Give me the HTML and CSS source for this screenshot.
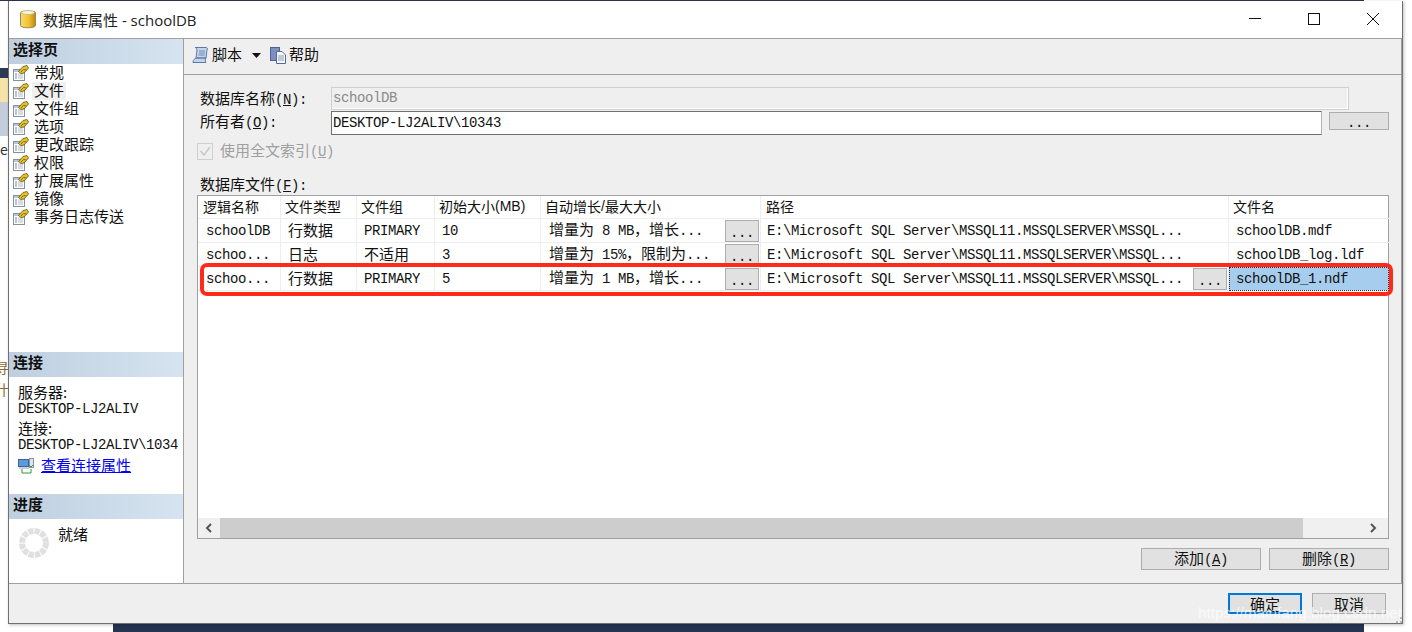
FILE: index.html
```html
<!DOCTYPE html>
<html lang="zh-CN">
<head>
<meta charset="utf-8">
<title>数据库属性 - schoolDB</title>
<link rel="stylesheet" href="styles.css">
</head>
<body>
<svg class="defs" width="0" height="0">
  <symbol id="page" viewBox="0 0 16 16">
    <rect x="0.500" y="4.500" width="11" height="11" fill="#fff" stroke="#8a9099"/>
    <rect x="1" y="5" width="10" height="2" fill="#b6c6dc"/>
    <path d="M2 9h2M2 11h2M2 13h2" stroke="#6d86b0"/>
    <path d="M5 9h5M5 11h5M5 13h5" stroke="#b0b8c4"/>
    <path d="M5.500 6.500 L10 1.500 L14 0.500 L15.500 3 L11 8 L8 8.500 Z" fill="#f0c020" stroke="#5a5020" stroke-width="0.8"/>
    <path d="M8 7l2.500-2.500 3 0.500" fill="none" stroke="#4f7d3a"/>
  </symbol>
</svg>
<div class="desktop">
  <div class="bg-top"></div>
  <div class="bg-navy"></div>
  <div class="bg-yellow"></div>
  <div class="bg-slate"></div>
  <div class="bg-bottom"></div>
  <span class="bg-e">e</span>
  <span class="bg-a">寻</span>
  <span class="bg-b">什</span>
</div>

<div class="window">
  <header class="titlebar">
    <svg class="db-icon" width="16" height="20" viewBox="0 0 16 20">
      <defs><linearGradient id="dbg" x1="0" x2="1" y1="0" y2="0"><stop offset="0" stop-color="#f7d978"/><stop offset="0.55" stop-color="#f2c230"/><stop offset="1" stop-color="#b98a10"/></linearGradient></defs>
      <path d="M0.500 3.500C0.500 1.500 15.500 1.500 15.500 3.500V16.500C15.500 19.500 0.500 19.500 0.500 16.500Z" fill="url(#dbg)" stroke="#9a8a50"/>
      <ellipse cx="8" cy="3.500" rx="6.500" ry="2" fill="#f5f1dc" stroke="#b8a868" stroke-width="0.6"/>
    </svg>
    <span class="title-text">数据库属性 - schoolDB</span>
    <div class="winctl">
      <svg width="14" height="14" viewBox="0 0 14 14"><path d="M1 6.500H13" stroke="#111"/></svg>
      <svg width="14" height="14" viewBox="0 0 14 14"><rect x="1.500" y="1.500" width="11" height="11" fill="none" stroke="#111"/></svg>
      <svg width="14" height="14" viewBox="0 0 14 14"><path d="M1 1L13 13M13 1L1 13" stroke="#111"/></svg>
    </div>
  </header>

  <div class="body">
    <aside class="sidebar">
      <h2 class="side-head">选择页</h2>
      <ul class="pages">
        <li><svg class="pg"><use href="#page"/></svg><span>常规</span></li>
        <li><svg class="pg"><use href="#page"/></svg><span class="current">文件</span></li>
        <li><svg class="pg"><use href="#page"/></svg><span>文件组</span></li>
        <li><svg class="pg"><use href="#page"/></svg><span>选项</span></li>
        <li><svg class="pg"><use href="#page"/></svg><span>更改跟踪</span></li>
        <li><svg class="pg"><use href="#page"/></svg><span>权限</span></li>
        <li><svg class="pg"><use href="#page"/></svg><span>扩展属性</span></li>
        <li><svg class="pg"><use href="#page"/></svg><span>镜像</span></li>
        <li><svg class="pg"><use href="#page"/></svg><span>事务日志传送</span></li>
      </ul>
      <h2 class="side-head conn-head">连接</h2>
      <div class="conn">
        <div class="conn-line cj">服务器:</div>
        <div class="conn-line m">DESKTOP-LJ2ALIV</div>
        <div class="conn-line cj gap">连接:</div>
        <div class="conn-line m">DESKTOP-LJ2ALIV\1034</div>
        <div class="conn-link">
          <svg width="16" height="16" viewBox="0 0 16 16">
            <rect x="0.500" y="1.500" width="10" height="7" fill="#5a9be0" stroke="#44618f"/>
            <rect x="1" y="9" width="10" height="2" fill="#c8d0dc"/>
            <rect x="11.500" y="0.500" width="4" height="9" fill="#dfe4ec" stroke="#8a94a4"/>
            <path d="M4 11v4h9v-4M11 7l2 2 2-2" fill="none" stroke="#2f9a2f"/>
          </svg>
          <a href="#">查看连接属性</a>
        </div>
      </div>
      <h2 class="side-head">进度</h2>
      <div class="progress">
        <svg width="30" height="30" viewBox="0 0 30 30"><circle cx="15" cy="15" r="12" fill="none" stroke="#e0e0e0" stroke-width="6" stroke-dasharray="5.300 1"/></svg>
        <span class="status">就绪</span>
      </div>
    </aside>

    <main class="main">
      <div class="toolbar">
        <svg class="tb-script" width="18" height="18" viewBox="0 0 18 18">
          <path d="M3 1.500H14C15 1.500 16 2.500 15 4L14 12H4L5 4C5 2.500 4 1.500 3 1.500ZM1 16.500C1 13 4 12 5 12H14C13 13 13 15 14 16.500Z" fill="#c4d4ea" stroke="#5c7aa6"/>
          <path d="M7 5h6M7 7h6M6.500 9h6" stroke="#6f8ab2"/>
        </svg>
        <span class="tb-label">脚本</span>
        <svg class="caret" width="9" height="5" viewBox="0 0 9 5"><path d="M0 0H9L4.500 5Z" fill="#111"/></svg>
        <svg width="16" height="17" viewBox="0 0 16 17">
          <rect x="0.500" y="0.500" width="9" height="13" fill="#7c8fc0" stroke="#4f6298"/>
          <path d="M6.500 4.500H12L15.500 8V16.500H6.500Z" fill="#f3f6fb" stroke="#5a6a8e"/>
          <path d="M8 9h6M8 11h6M8 13h6" stroke="#8d9cb8"/>
        </svg>
        <span class="tb-label">帮助</span>
      </div>

      <div class="content">
        <div class="field">
          <label>数据库名称<span class="m">(<u>N</u>):</span></label>
          <div class="input disabled m">schoolDB</div>
        </div>
        <div class="field owner">
          <label>所有者<span class="m">(<u>O</u>):</span></label>
          <div class="input m">DESKTOP-LJ2ALIV\10343</div>
          <button class="btn more-btn m">...</button>
        </div>
        <div class="check-row">
          <span class="check"><svg width="14" height="14" viewBox="0 0 14 14"><path d="M2.500 7L6 11L12 3" fill="none" stroke="#c8c8c8" stroke-width="1.500"/></svg></span>
          <span>使用全文索引<span class="m">(<u>U</u>)</span></span>
        </div>
        <div class="files-label">数据库文件<span class="m">(<u>F</u>):</span></div>

        <div class="table">
          <div class="rows">
            <div class="row head">
              <div class="cell c1">逻辑名称</div>
              <div class="cell c2">文件类型</div>
              <div class="cell c3">文件组</div>
              <div class="cell c4">初始大小<span class="sans">(MB)</span></div>
              <div class="cell c5">自动增长<span class="sans">/</span>最大大小</div>
              <div class="cell c6">路径</div>
              <div class="cell c7">文件名</div>
            </div>
            <div class="row">
              <div class="cell c1 m">schoolDB</div>
              <div class="cell c2 cj">行数据</div>
              <div class="cell c3 m">PRIMARY</div>
              <div class="cell c4 m">10</div>
              <div class="cell c5"><span class="txt">增量为<span class="m"> 8 MB</span>，增长<span class="m">...</span></span><button class="btn cell-btn m">...</button></div>
              <div class="cell c6 m">E:\Microsoft SQL Server\MSSQL11.MSSQLSERVER\MSSQL...</div>
              <div class="cell c7 m">schoolDB.mdf</div>
            </div>
            <div class="row">
              <div class="cell c1 m">schoo...</div>
              <div class="cell c2 cj">日志</div>
              <div class="cell c3 cj">不适用</div>
              <div class="cell c4 m">3</div>
              <div class="cell c5"><span class="txt">增量为<span class="m"> 15%</span>，限制为<span class="m">...</span></span><button class="btn cell-btn m">...</button></div>
              <div class="cell c6 m">E:\Microsoft SQL Server\MSSQL11.MSSQLSERVER\MSSQL...</div>
              <div class="cell c7 m">schoolDB_log.ldf</div>
            </div>
            <div class="row">
              <div class="cell c1 m">schoo...</div>
              <div class="cell c2 cj">行数据</div>
              <div class="cell c3 m">PRIMARY</div>
              <div class="cell c4 m">5</div>
              <div class="cell c5"><span class="txt">增量为<span class="m"> 1 MB</span>，增长<span class="m">...</span></span><button class="btn cell-btn m">...</button></div>
              <div class="cell c6 m"><span class="txt">E:\Microsoft SQL Server\MSSQL11.MSSQLSERVER\MSSQL...</span><button class="btn cell-btn m">...</button></div>
              <div class="cell c7 selected m">schoolDB_1.ndf</div>
            </div>
          </div>
          <div class="scrollbar">
            <svg width="22" height="20" viewBox="0 0 22 20"><path d="M13 6L9 10L13 14" fill="none" stroke="#555" stroke-width="2"/></svg>
            <div class="thumb"></div>
            <svg class="sb-right" width="22" height="20" viewBox="0 0 22 20"><path d="M9 6L13 10L9 14" fill="none" stroke="#555" stroke-width="2"/></svg>
          </div>
          <div class="highlight"></div>
        </div>

        <div class="file-actions">
          <button class="btn action">添加<span class="m">(<u>A</u>)</span></button>
          <button class="btn action">删除<span class="m">(<u>R</u>)</span></button>
        </div>
      </div>
    </main>
  </div>

  <footer class="footer">
    <button class="btn dlg primary">确定</button>
    <button class="btn dlg">取消</button>
  </footer>
  <span class="watermark">https://mainfang.blog.csdn.net</span>
  <svg class="grip" width="6" height="6" viewBox="0 0 6 6"><path d="M4 0h2v2H4zM0 4h2v2H0zM4 4h2v2H4z" fill="#b8b8b8"/></svg>
</div>
</body>
</html>
```
FILE: styles.css
```css
* { box-sizing: border-box; }
html, body { margin: 0; padding: 0; }
body {
  width: 1412px;
  height: 632px;
  overflow: hidden;
  position: relative;
  background: #fff;
  font-family: "Noto Sans CJK SC", "Liberation Sans", sans-serif;
  font-size: 15px;
  line-height: 18px;
  color: #111;
}
.defs { position: absolute; }
.m {
  font-family: "Liberation Mono", "Noto Sans CJK SC", monospace;
  font-size: 14px;
  letter-spacing: -0.4px;
}
.sans { font-family: "Liberation Sans", sans-serif; }
u { text-underline-offset: 1px; }

/* Things behind the dialog */
.desktop { position: absolute; inset: 0; }
.bg-top { position: absolute; left: 0; top: 0; width: 1364px; height: 1px; background: #2a3548; }
.bg-navy { position: absolute; left: 0; top: 68px; width: 9px; height: 10px; background: #2b3a55; }
.bg-yellow { position: absolute; left: 0; top: 78px; width: 9px; height: 24px; background: #f5e3a8; }
.bg-slate { position: absolute; left: 0; top: 102px; width: 9px; height: 34px; background: #c3cddb; }
.bg-bottom { position: absolute; left: 113px; top: 623px; width: 1251px; height: 9px; background: #253450; }
.bg-e, .bg-a, .bg-b { position: absolute; left: -5px; font-size: 14px; color: #8a6a30; }
.bg-e { top: 140px; left: 0; color: #333; }
.bg-a { top: 358px; }
.bg-b { top: 380px; }

/* Dialog */
.window {
  position: absolute;
  left: 8px;
  top: 1px;
  width: 1395px;
  height: 623px;
  display: flex;
  flex-direction: column;
  background: #efefef;
  border: 1px solid #707070;
  border-top: 0;
  box-shadow: 1px 1px 3px rgba(0, 0, 0, 0.25);
}

.titlebar {
  height: 38px;
  flex: none;
  display: flex;
  align-items: center;
  padding-left: 11px;
  background: #fff;
  border-bottom: 1px solid #a0a0a0;
}
.db-icon { margin-right: 7px; margin-top: -1px; }
.title-text { font-family: "Open Sans", "Noto Sans CJK SC", sans-serif; font-size: 15px; color: #222; }
.winctl {
  margin-left: auto;
  display: flex;
  gap: 45px;
  padding-right: 22px;
  padding-bottom: 1px;
}

.body { flex: 1; display: flex; min-height: 0; }

.sidebar {
  width: 175px;
  flex: none;
  display: flex;
  flex-direction: column;
  background: #fff;
  border-right: 1px solid #a0a0a0;
  border-bottom: 1px solid #a0a0a0;
  overflow: hidden;
}
.side-head {
  margin: 0;
  height: 25px;
  flex: none;
  padding-left: 4px;
  font-size: 15px;
  line-height: 19px;
  font-weight: 700;
  color: #111;
  background: linear-gradient(90deg, #bfcfdf, #d6e4f1);
}
.pages { list-style: none; margin: 0; padding: 0; }
.pages li { height: 18px; display: flex; align-items: center; padding-left: 4px; }
.pg { width: 16px; height: 16px; margin-right: 3px; flex: none; }
.pages span { padding: 0 2px 2px; line-height: 16px; }
.pages .current { background: #f0f0f0; }

.conn-head { margin-top: auto; }
.conn { height: 117px; flex: none; padding: 8px 0 0 9px; white-space: nowrap; overflow: hidden; }
.conn-line { height: 16px; line-height: 16px; }
.conn-line.cj { line-height: 13px; }
.conn-line.m { line-height: 17px; }
.conn-line.gap { margin-top: 4px; }
.conn-link { display: flex; align-items: center; gap: 7px; margin-top: 3px; height: 20px; }
.conn-link a { color: #0000ee; line-height: 17px; padding-bottom: 3px; }

.progress { height: 64px; flex: none; display: flex; align-items: flex-start; padding: 9px 0 0 10px; gap: 9px; }
.status { margin-top: -3px; }

.main { flex: 1; min-width: 0; display: flex; flex-direction: column; }
.toolbar {
  height: 36px;
  flex: none;
  display: flex;
  align-items: center;
  padding: 0 0 3px 8px;
  border-bottom: 1px solid #a0a0a0;
  border-right: 1px solid #a0a0a0;
}
.tb-script { margin-right: -1px; }
.tb-label { margin-left: 3px; margin-top: -3px; }
.caret { margin: 0 9px 0 10px; }

.content {
  flex: 1;
  min-height: 0;
  display: flex;
  flex-direction: column;
  padding: 12px 12px 12px 13px;
  border-right: 1px solid #a0a0a0;
  border-bottom: 1px solid #a0a0a0;
}
.field { display: grid; grid-template-columns: 134px 1fr; align-items: center; }
.field label { padding-left: 3px; }
.field .input { height: 23px; line-height: 21px; padding-left: 1px; white-space: nowrap; }
.input { background: #fff; border: 1px solid #707070; border-right-color: #b0b0b0; }
.input.disabled {
  background: #efefef;
  border: 1px solid #cfcfcf;
  box-shadow: inset -1px -1px 0 #fff;
  color: #8a8a8a;
  margin-right: 40px;
}
.owner { grid-template-columns: 134px 1fr 67px; margin-top: 1px; }
.owner label { padding-bottom: 3px; }
.owner .input { height: 24px; line-height: 22px; }
.btn {
  padding: 0;
  margin: 0;
  background: #e1e1e1;
  border: 1px solid #adadad;
  color: #111;
  font-family: inherit;
  font-size: 15px;
  line-height: 18px;
}
.btn.m { font-family: "Liberation Mono", monospace; font-size: 14px; letter-spacing: -0.4px; }
.more-btn { height: 18px; margin: 0 0 5px 7px; line-height: 20px; }

.check-row {
  display: flex;
  align-items: center;
  gap: 7px;
  height: 18px;
  margin-top: 7px;
  color: #a0a0a0;
}
.check { width: 16px; height: 17px; border: 1px solid #cfcfcf; background: #efefef; display: flex; align-items: center; justify-content: center; }
.files-label { margin-top: 15px; height: 19px; padding-left: 3px; }

.table {
  position: relative;
  flex: none;
  height: 344px;
  margin-top: 1px;
  display: flex;
  flex-direction: column;
  background: #fff;
  border: 1px solid #a0a0a0;
}
.rows { flex: 1; min-height: 0; }
.row {
  display: grid;
  grid-template-columns: 83px 76px 78px 106px 220px 468px 160px;
  height: 24px;
}
.row.head { height: 23px; font-size: 14px; }
.cell {
  display: flex;
  align-items: center;
  justify-content: space-between;
  white-space: nowrap;
  overflow: hidden;
  border-right: 1px solid #eeeeee;
  border-bottom: 1px solid #eeeeee;
  padding-left: 7px;
}
.cell.c6 { padding-left: 6px; }
.cell.c5 { padding-left: 8px; }
.cell.c1 { padding-left: 8px; }
.cell.c2 { padding-left: 7px; }
.cell.cj { padding-bottom: 2px; }
.c5 .txt { padding-bottom: 1px; }
.row.head .cell { padding: 0 0 2px 4px; justify-content: flex-start; }
.row.head .cell.c1, .row.head .cell.c6 { padding-left: 5px; }
.row.head .c7, .row .c7 { border-right: 0; }
.row.head .sans { font-size: 14px; }
.cell-btn { width: 34px; height: 22px; flex: none; margin-right: 1px; line-height: 24px; }
.selected { background: #a6cdee; outline: 1px dotted #333; outline-offset: -1px; }

.scrollbar { height: 20px; flex: none; display: flex; background: #f0f0f0; }
.thumb { width: 1083px; background: #cdcdcd; }
.sb-right { margin-left: auto; margin-right: 4px; }

.highlight {
  position: absolute;
  left: 2px;
  top: 67px;
  width: 1193px;
  height: 33px;
  border: 4px solid #ff2a1a;
  border-radius: 7px;
  pointer-events: none;
}

.file-actions { display: flex; justify-content: flex-end; gap: 8px; margin-top: 9px; }
.action { width: 120px; height: 22px; }

.footer {
  height: 39px;
  flex: none;
  display: flex;
  justify-content: flex-end;
  gap: 10px;
  padding: 9px 16px 0 0;
}
.dlg { width: 74px; height: 21px; line-height: 19px; }
.primary { border: 2px solid #0078d7; line-height: 17px; }

.watermark {
  position: absolute;
  right: 0;
  bottom: -1px;
  font-family: "Liberation Sans", sans-serif;
  font-size: 15.3px;
  line-height: 22px;
  color: rgba(255, 255, 255, 0.7);
  white-space: nowrap;
}
.grip { position: absolute; right: 0; bottom: 0; }
```
